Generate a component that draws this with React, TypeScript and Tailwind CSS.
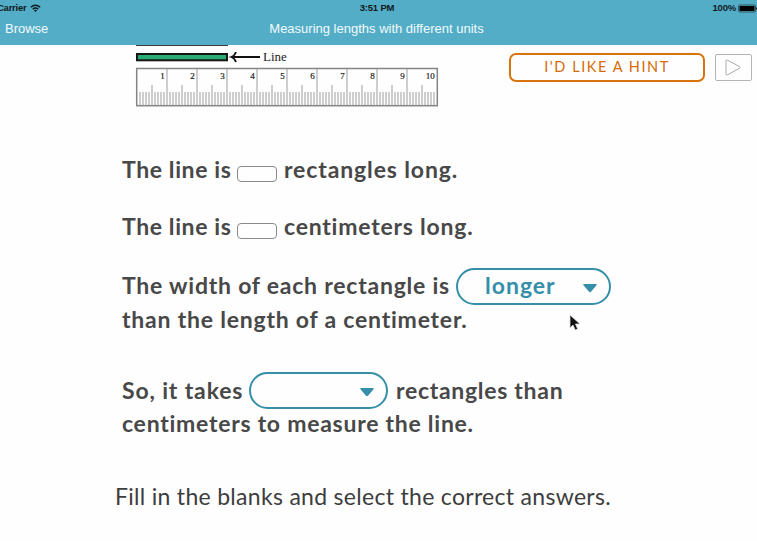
import React from "react";

const units = [1, 2, 3, 4, 5, 6, 7, 8, 9, 10];
const ticks = Array.from({ length: 99 }, (_, i) => i + 1);

function Header() {
  return (
    <header className="h-[45px] shrink-0 overflow-hidden bg-[#54adc7] font-['Liberation_Sans',Arial,sans-serif]">
      <div className="grid h-4 grid-cols-3 items-center text-[9.5px] leading-4 font-bold text-[#10191d]">
        <div className="-ml-[3px] flex items-center gap-1">
          <span className="w-[29px] whitespace-nowrap tracking-[-0.25px]">Carrier</span>
          <svg width="11" height="9" viewBox="0 0 11 9" fill="none" stroke="#10191d" strokeWidth="1.4">
            <path d="M.8 3.2Q5.5-.9 10.2 3.2M2.7 5.2Q5.5 2.8 8.3 5.2" />
            <path d="M5.5 8 3.9 6.3Q5.5 5.2 7.1 6.3Z" fill="#10191d" stroke="none" />
          </svg>
        </div>
        <span className="pr-[3px] text-center tracking-[-0.2px]">3:51 PM</span>
        <div className="flex items-center justify-end gap-[2px]">
          <span className="tracking-[-0.2px]">100%</span>
          <svg width="19" height="9" viewBox="0 0 19 9">
            <rect x=".5" y="1" width="17" height="7" rx="1.5" fill="none" stroke="#10191d" strokeWidth=".6" />
            <rect x="1.5" y="2" width="15" height="5" rx=".5" fill="#000" />
            <path d="M18.5 3.5v2" stroke="#10191d" />
          </svg>
        </div>
      </div>
      <div className="grid h-[25px] grid-cols-[100px_1fr_104px] items-center text-[13px] text-[#f1fafc]">
        <span className="pl-[5px]">Browse</span>
        <span className="text-center whitespace-nowrap">Measuring lengths with different units</span>
      </div>
    </header>
  );
}

function Ruler() {
  return (
    <svg width="310" height="65" viewBox="130 45 310 65" className="shrink-0" fontFamily="'Liberation Serif', serif" fill="#222">
      <path d="M136 45.4h92" stroke="#222" strokeWidth="1" />
      <rect x="137" y="54" width="90" height="6.3" fill="#28ab74" stroke="#151515" strokeWidth="2" />
      <path d="M232 57h28M236 52Q234.5 56 231.3 57Q234.5 58 236 62" fill="none" stroke="#111" strokeWidth="1.8" />
      <text x="263" y="61" fontSize="13">Line</text>
      {ticks.map((t) => (
        <path
          key={t}
          d={`M${137 + t * 3} ${t % 10 === 0 ? 69 : t % 5 === 0 ? 85 : 92}V105`}
          stroke="#c6c6c6"
          strokeWidth="1.7"
        />
      ))}
      <rect x="136.7" y="68.5" width="300.6" height="37.2" fill="none" stroke="#858585" strokeWidth="1.5" />
      {units.map((n) => (
        <text key={n} x={134.8 + n * 30} y="78.6" fontSize="9" textAnchor="end" stroke="#222" strokeWidth=".2">
          {n}
        </text>
      ))}
    </svg>
  );
}

function Caret() {
  return (
    <svg className="mt-[3px]" width="14" height="9" viewBox="0 0 14 9" fill="#368fa9">
      <path d="M.8 0h12.4q.9.5.3 1.2L8 7.8q-1 .8-2 0L.5 1.2Q-.1.5.8 0Z" />
    </svg>
  );
}

export default function App() {
  return (
    <div className="flex h-[541px] w-[757px] flex-col overflow-hidden bg-[#fefefe] font-[Lato,sans-serif] text-[#484848]">
      <Header />
      <div className="flex h-[65px] shrink-0 items-start pl-[130px]">
        <Ruler />
        <button className="mt-2 ml-[69px] h-[29px] w-[196px] shrink-0 rounded-[7px] border-2 border-[#d9730d] text-[14.5px] leading-none tracking-[1.55px] whitespace-nowrap text-[#d46c08]">
          I'D LIKE A HINT
        </button>
        <button className="mt-[9px] ml-[10px] flex h-[27px] w-[37px] shrink-0 items-center justify-center rounded-[2px] border border-[#b4b4b4] pr-px">
          <svg width="16" height="17" viewBox="0 0 16 17" fill="none" stroke="#aaa">
            <path d="M1 2.2Q1 .5 2.5 1.2L14.5 7.5Q15.5 8.5 14.5 9.3L2.5 15.8Q1 16.4 1 14.8Z" />
          </svg>
        </button>
      </div>
      <main className="pt-[42px] pl-[122px] text-[23px] leading-[34px] font-bold whitespace-nowrap">
        <div className="flex h-[57px]">
          <span className="w-[115px] tracking-[0.6px]">The line is</span>
          <span className="mt-[14px] h-4 w-10 rounded-[4px] border border-[#8a8a8a]" />
          <span className="ml-[7px] tracking-[0.87px]">rectangles long.</span>
        </div>
        <div className="flex h-[59px]">
          <span className="w-[115px] tracking-[0.6px]">The line is</span>
          <span className="mt-[14px] h-4 w-10 rounded-[4px] border border-[#8a8a8a]" />
          <span className="ml-[7px] tracking-[0.77px]">centimeters long.</span>
        </div>
        <div className="flex h-[34px]">
          <span className="w-[334px] tracking-[0.77px]">The width of each rectangle is</span>
          <div className="flex h-[37px] w-[155px] items-center justify-between rounded-full border-2 border-[#368fa9] pr-[12px] pl-[27px] text-[#368fa9]">
            <span className="-mt-[3px] tracking-[1px]">longer</span>
            <Caret />
          </div>
        </div>
        <div className="flex h-[71px]">
          <span className="w-[446px] tracking-[0.78px]">than the length of a centimeter.</span>
          <svg className="mt-[12px] shrink-0" width="13" height="18" viewBox="0 0 13 18">
            <path d="M2 1v13l3-3 2.2 5 2.5-1-2.2-5H12Z" fill="#111" stroke="#ddd" strokeWidth=".8" />
          </svg>
        </div>
        <div className="flex h-[33px]">
          <span className="w-[127px] tracking-[0.85px]">So, it takes</span>
          <div className="-mt-px flex h-[37px] w-[139px] items-center justify-end rounded-full border-2 border-[#368fa9] pr-[12px]">
            <Caret />
          </div>
          <span className="ml-[8px] tracking-[0.7px]">rectangles than</span>
        </div>
        <div className="h-[73px] tracking-[0.74px]">centimeters to measure the line.</div>
        <p className="-ml-[7px] font-normal tracking-[0.3px] text-[#3d3d3d]">Fill in the blanks and select the correct answers.</p>
      </main>
    </div>
  );
}
